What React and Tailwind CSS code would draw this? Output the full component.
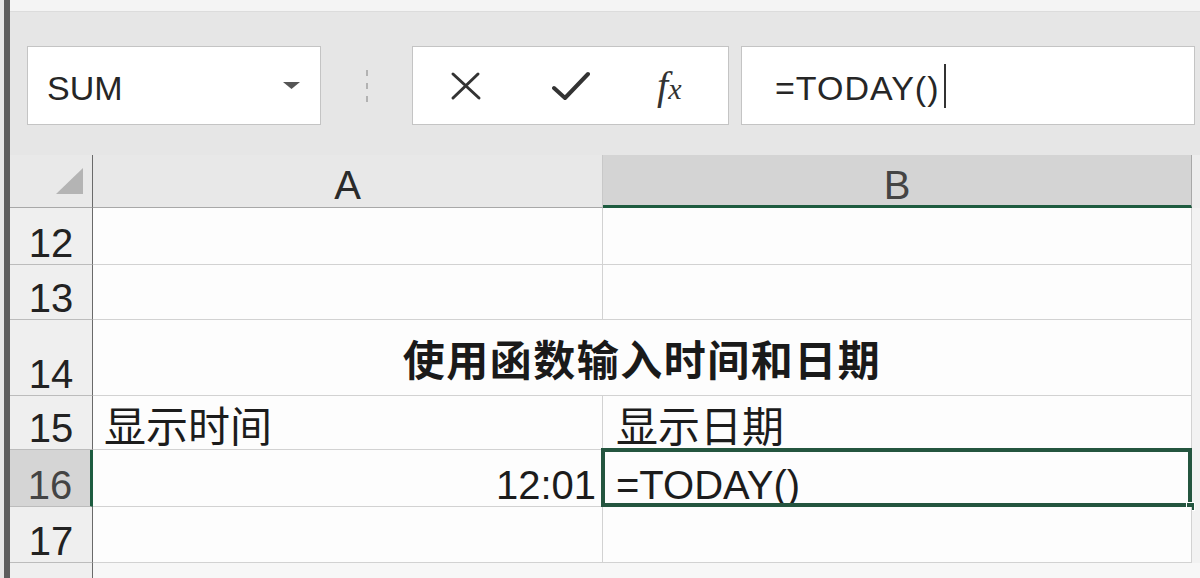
import React from "react";

const font = { fontFamily: '"Liberation Sans", "Noto Sans CJK SC", sans-serif' };

const rows = [
  { n: 12, h: "h-[57px]" },
  { n: 13, h: "h-[55px]" },
  { n: 14, h: "h-[76px]" },
  { n: 15, h: "h-[54px]" },
  { n: 16, h: "h-[57px]" },
  { n: 17, h: "h-[56px]" },
];

const RowHead = ({ n, selected }) => (
  <div
    className={
      "w-[83px] shrink-0 flex items-end justify-center pb-[1px] text-[40px] leading-none text-[#222] border-b border-[#bcbcbc] " +
      (selected
        ? "bg-[#d5d5d5] border-r-[3px] border-r-[#1e5c40] text-[#444]"
        : "bg-[#efefef] border-r border-r-[#6a6a6a]")
    }
  >
    {n}
  </div>
);

const Cell = ({ w, children, className = "" }) => (
  <div
    className={
      w +
      " shrink-0 flex items-end border-b border-r border-[#d2d2d2] bg-[#fdfdfd] text-[40px] leading-none text-[#1c1c1c] " +
      className
    }
  >
    {children}
  </div>
);

const App = () => {
  return (
    <div className="w-[1200px] h-[578px] flex bg-[#f0f0f0] overflow-hidden" style={font}>
      <div className="w-[4px] bg-[#e6e6e6]" />
      <div className="w-[6px] bg-[#5d5d5d]" />
      <div className="flex-1 flex flex-col">
        <div className="h-[12px] bg-[#f4f4f4] border-b border-[#dcdcdc]" />
        {/* formula bar */}
        <div className="h-[143px] bg-[#e6e6e6] flex items-start pt-[34px]">
          <div className="ml-[17px] w-[294px] h-[79px] bg-white border border-[#c4c4c4] flex items-center pl-[19px] pr-[20px]">
            <span className="text-[34px] leading-none text-[#262626] mt-[4px]">SUM</span>
            <svg className="ml-auto" width="17" height="7" viewBox="0 0 17 7">
              <path d="M0 0 L17 0 L8.5 7 Z" fill="#555" />
            </svg>
          </div>
          <div className="w-[91px] h-[79px] flex flex-col items-center justify-center gap-[7px]">
            <span className="w-[2px] h-[6px] bg-[#b2b2b2]" />
            <span className="w-[2px] h-[6px] bg-[#b2b2b2]" />
            <span className="w-[2px] h-[6px] bg-[#b2b2b2]" />
          </div>
          <div className="w-[317px] h-[79px] bg-white border border-[#c4c4c4] flex items-center">
            <svg className="ml-[37px]" width="32" height="30" viewBox="0 0 32 30">
              <path d="M3 3 L29 27 M28 3 L3 27" stroke="#333" strokeWidth="3" strokeLinecap="round" />
            </svg>
            <svg className="ml-[70px]" width="38" height="30" viewBox="0 0 38 30">
              <path d="M2 17 L13 27 L36 3" stroke="#333" strokeWidth="4" fill="none" strokeLinejoin="round" strokeLinecap="round" />
            </svg>
            <span
              className="ml-[67px] italic text-[40px] leading-none text-[#333]"
              style={{ fontFamily: '"Liberation Serif", serif' }}
            >
              f<span className="text-[30px]">x</span>
            </span>
          </div>
          <div className="ml-[12px] w-[454px] h-[79px] bg-white border border-[#c4c4c4] flex items-center pl-[33px]">
            <span className="text-[34px] leading-none text-[#262626] mt-[4px] tracking-[1px]">=TODAY()</span>
            <span className="ml-[4px] w-[2px] h-[44px] bg-[#333]" />
          </div>
        </div>
        {/* grid */}
        <div className="flex flex-col">
          <div className="flex h-[53px]">
            <div className="w-[83px] shrink-0 bg-[#e9e9e9] border-b border-[#a8a8a8] border-r border-r-[#6a6a6a] flex items-center justify-end pr-[9px]">
              <svg width="27" height="26" viewBox="0 0 27 26">
                <path d="M27 0 L27 26 L0 26 Z" fill="#b4b4b4" />
              </svg>
            </div>
            <div className="w-[510px] shrink-0 bg-[#e8e8e8] border-b border-[#a8a8a8] border-r border-r-[#c8c8c8] flex items-end justify-center pb-[2px] text-[40px] leading-none text-[#2a2a2a]">
              A
            </div>
            <div className="w-[589px] shrink-0 bg-[#d4d4d4] border-b-[3px] border-[#1e5c40] border-r border-r-[#a8a8a8] flex items-end justify-center pb-0 text-[40px] leading-none text-[#444]">
              B
            </div>
            <div className="flex-1 bg-[#ededed]" />
          </div>

          {rows.map((r) => (
            <div key={r.n} className={"flex " + r.h}>
              <RowHead n={r.n} selected={r.n === 16} />
              {r.n === 14 ? (
                <Cell w="w-[1099px]" className="justify-center pb-[12px]">
                  <span className="font-bold text-[42px] tracking-[1.5px] text-[#1a1a1a]">使用函数输入时间和日期</span>
                </Cell>
              ) : (
                <>
                  <Cell w="w-[510px]" className={r.n === 16 ? "justify-end pr-[6px] pb-[1px]" : "pl-[11px]"}>
                    {r.n === 15 && <span className="text-[42px] leading-none">显示时间</span>}
                    {r.n === 16 && "12:01"}
                  </Cell>
                  <Cell w="w-[589px]" className="pl-[13px] relative">
                    {r.n === 15 && <span className="text-[42px] leading-none">显示日期</span>}
                    {r.n === 16 && (
                      <>
                        <span className="pb-[1px]">=TODAY()</span>
                        <div className="absolute -left-[2px] -top-[2px] -right-[1px] -bottom-[1px] border-[4px] border-[#24553f]" />
                        <div className="absolute -right-[4px] -bottom-[5px] w-[9px] h-[9px] bg-[#24553f] border border-white" />
                      </>
                    )}
                  </Cell>
                </>
              )}
              <div className="flex-1 bg-[#f2f2f2]" />
            </div>
          ))}
          <div className="flex h-[15px]">
            <div className="w-[83px] shrink-0 bg-[#efefef] border-r border-[#6a6a6a]" />
            <div className="flex-1 bg-[#f7f7f7]" />
          </div>
        </div>
      </div>
    </div>
  );
};

export default App;
